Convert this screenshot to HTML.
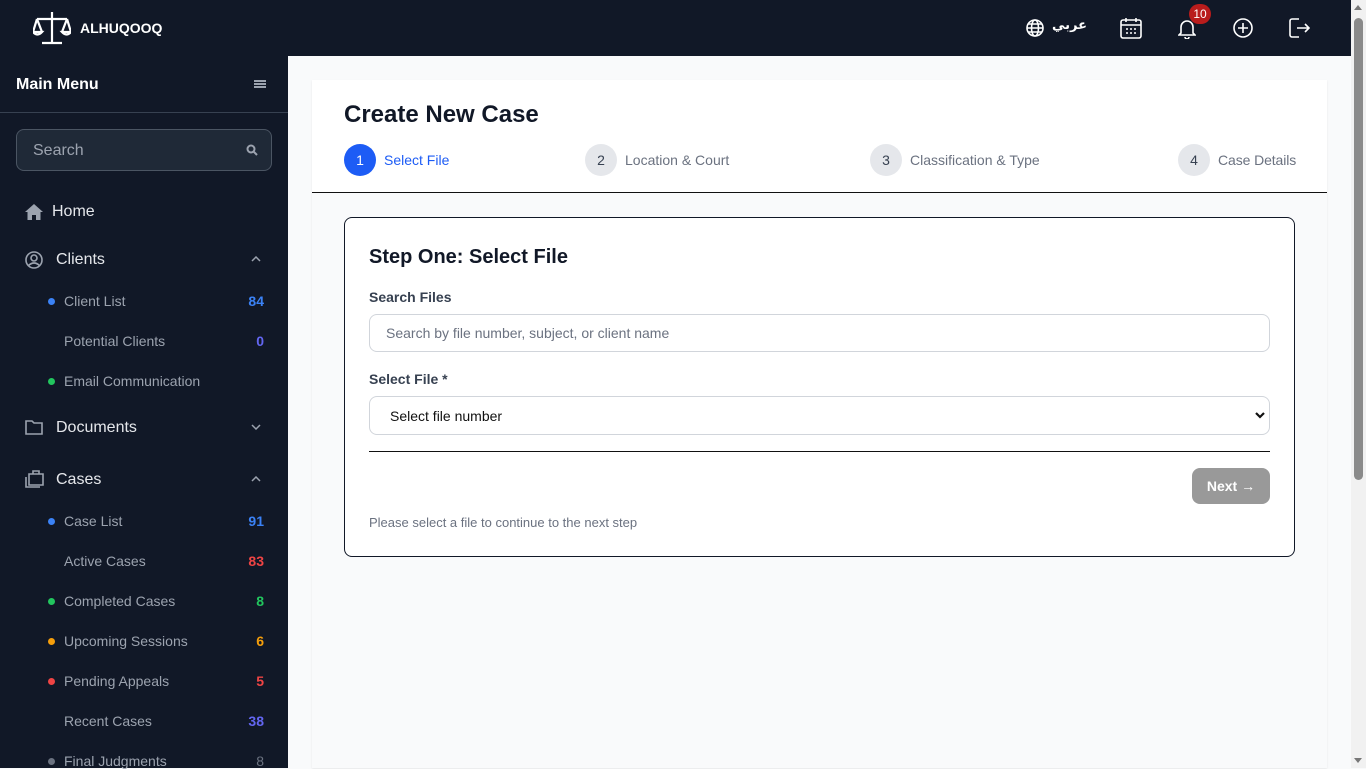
<!DOCTYPE html>
<html><head><meta charset="utf-8">
<style>
*{box-sizing:border-box;margin:0;padding:0}
body{width:1366px;height:768px;overflow:hidden;font-family:"Liberation Sans","Noto Sans CJK SC",sans-serif;background:#f9fafb;position:relative}
.top{position:absolute;left:0;top:0;width:1351px;height:56px;background:#111827;color:#fff}
.side{position:absolute;left:0;top:56px;width:288px;height:712px;background:#111827;color:#e5e7eb}
.sb{position:absolute;right:0;top:0;width:15px;height:768px;background:#f1f1f1}
.sb .th{position:absolute;left:3px;top:18px;width:9px;height:462px;background:#8a8a8a;border-radius:5px}
.ic{position:absolute}
.item{position:absolute;left:0;width:288px;font-size:16px;color:#e5e7eb}
.sub{position:absolute;left:64px;font-size:14px;color:#9ca3af}
.dot{position:absolute;left:-16px;top:5px;width:7px;height:7px;border-radius:50%}
.cnt{position:absolute;left:200px;width:64px;text-align:right;font-weight:bold;font-size:14px}
.chev{position:absolute;left:251px;top:5px}
</style></head><body>
<div class="top">
 <svg class="ic" style="left:33px;top:11px" width="38" height="34" viewBox="0 0 38 34" fill="none" stroke="#fff" stroke-width="2.2"><path d="M19 1v31M9 32h20M4 8h30M4 8l-4 13M4 8l5 13M34 8l-5 13M34 8l4 13M0 21q4.5 5 9 0zM29 21q4.5 5 9 0z"/></svg>
 <div style="position:absolute;left:80px;top:20px;font-weight:bold;font-size:14px">ALHUQOOQ</div>
 <svg class="ic" style="left:1026px;top:19px" width="18" height="18" viewBox="0 0 18 18" fill="none" stroke="#fff" stroke-width="1.6"><circle cx="9" cy="9" r="8"/><ellipse cx="9" cy="9" rx="3.5" ry="8"/><path d="M1 9h16M2.5 5h13M2.5 13h13"/></svg>
 <div style="position:absolute;left:1052px;top:18px;font-size:13px;font-weight:bold;font-family:'DejaVu Sans',sans-serif">عربي</div>
 <svg class="ic" style="left:1120px;top:17px" width="22" height="22" viewBox="0 0 22 22" fill="none" stroke="#fff" stroke-width="1.6"><rect x="1" y="3" width="20" height="18" rx="2"/><path d="M1 8h20M6 1v4M16 1v4"/><g fill="#fff" stroke="none"><circle cx="7" cy="12" r="1"/><circle cx="11" cy="12" r="1"/><circle cx="15" cy="12" r="1"/><circle cx="7" cy="16" r="1"/><circle cx="11" cy="16" r="1"/><circle cx="15" cy="16" r="1"/></g></svg>
 <svg class="ic" style="left:1178px;top:18px" width="18" height="21" viewBox="0 0 18 21" fill="none" stroke="#fff" stroke-width="1.6"><path d="M3 15V9a6 6 0 0 1 12 0v6l2 2H1zM7 19a2 2 0 0 0 4 0"/></svg>
 <div style="position:absolute;left:1189px;top:4px;width:22px;height:20px;border-radius:10px;background:#b91c1c;font-size:12px;text-align:center;line-height:20px">10</div>
 <svg class="ic" style="left:1233px;top:18px" width="20" height="20" viewBox="0 0 20 20" fill="none" stroke="#fff" stroke-width="1.6"><circle cx="10" cy="10" r="9"/><path d="M10 5v10M5 10h10"/></svg>
 <svg class="ic" style="left:1289px;top:18px" width="21" height="20" viewBox="0 0 21 20" fill="none" stroke="#fff" stroke-width="1.6"><path d="M10 1H3a2 2 0 0 0-2 2v14a2 2 0 0 0 2 2h7M8 10h12M16 6l4 4-4 4"/></svg>
</div>
<div class="side">
 <div style="position:absolute;left:16px;top:20px;font-weight:bold;font-size:16px;color:#fff">Main Menu</div>
 <div style="position:absolute;left:254px;top:24px;width:12px;height:8px;border-top:2px solid #9ca3af;border-bottom:2px solid #9ca3af"><div style="margin-top:1px;height:2px;background:#9ca3af"></div></div>
 <div style="position:absolute;left:0;top:56px;width:288px;height:1px;background:#374151"></div>
 <div style="position:absolute;left:16px;top:73px;width:256px;height:42px;border:1px solid #4b5563;border-radius:8px;background:#1f2937;color:#9ca3af;font-size:16px;padding:12px 16px">Search<svg style="position:absolute;right:13px;top:14px" width="12" height="12" viewBox="0 0 12 12" fill="none" stroke="#9ca3af" stroke-width="2"><circle cx="5" cy="5" r="3.5"/><path d="M7.5 7.5L11 11"/></svg></div>
 <div class="item" style="top:147px"><svg class="ic" style="left:25px;top:1px" width="18" height="16" viewBox="0 0 18 16" fill="#9ca3af"><path d="M9 0L0 8h2.5v8h4.5v-5h4v5h4.5V8H18z"/></svg><span style="position:absolute;left:52px">Home</span></div>
 <div class="item" style="top:195px"><svg class="ic" style="left:25px;top:0" width="18" height="18" viewBox="0 0 18 18" fill="none" stroke="#9ca3af" stroke-width="1.6"><circle cx="9" cy="9" r="8"/><circle cx="9" cy="7" r="3"/><path d="M3.5 14.5q5.5-5 11 0"/></svg><span style="position:absolute;left:56px">Clients</span><svg class="chev" width="10" height="6" viewBox="0 0 10 6" fill="none" stroke="#9ca3af" stroke-width="1.5"><path d="M1 5l4-4 4 4"/></svg></div>
 <div class="sub" style="top:237px"><span class="dot" style="background:#3b82f6"></span>Client List</div><div class="cnt" style="top:237px;color:#3b82f6">84</div>
 <div class="sub" style="top:277px">Potential Clients</div><div class="cnt" style="top:277px;color:#6366f1">0</div>
 <div class="sub" style="top:317px"><span class="dot" style="background:#22c55e"></span>Email Communication</div>
 <div class="item" style="top:363px"><svg class="ic" style="left:25px;top:1px" width="18" height="15" viewBox="0 0 18 15" fill="none" stroke="#9ca3af" stroke-width="1.6"><path d="M1 1h6l2 2h8v11H1z"/></svg><span style="position:absolute;left:56px">Documents</span><svg class="chev" width="10" height="6" viewBox="0 0 10 6" fill="none" stroke="#9ca3af" stroke-width="1.5"><path d="M1 1l4 4 4-4"/></svg></div>
 <div class="item" style="top:415px"><svg class="ic" style="left:25px;top:-1px" width="19" height="18" viewBox="0 0 19 18" fill="none" stroke="#9ca3af" stroke-width="1.6"><path d="M4 4h14v11H4zM8 4V1h6v3M1 7v10h14"/></svg><span style="position:absolute;left:56px">Cases</span><svg class="chev" width="10" height="6" viewBox="0 0 10 6" fill="none" stroke="#9ca3af" stroke-width="1.5"><path d="M1 5l4-4 4 4"/></svg></div>
 <div class="sub" style="top:457px"><span class="dot" style="background:#3b82f6"></span>Case List</div><div class="cnt" style="top:457px;color:#3b82f6">91</div>
 <div class="sub" style="top:497px">Active Cases</div><div class="cnt" style="top:497px;color:#ef4444">83</div>
 <div class="sub" style="top:537px"><span class="dot" style="background:#22c55e"></span>Completed Cases</div><div class="cnt" style="top:537px;color:#22c55e">8</div>
 <div class="sub" style="top:577px"><span class="dot" style="background:#f59e0b"></span>Upcoming Sessions</div><div class="cnt" style="top:577px;color:#f59e0b">6</div>
 <div class="sub" style="top:617px"><span class="dot" style="background:#ef4444"></span>Pending Appeals</div><div class="cnt" style="top:617px;color:#ef4444">5</div>
 <div class="sub" style="top:657px">Recent Cases</div><div class="cnt" style="top:657px;color:#6366f1">38</div>
 <div class="sub" style="top:697px"><span class="dot" style="background:#6b7280"></span>Final Judgments</div><div class="cnt" style="top:697px;color:#6b7280;font-weight:normal">8</div>
</div>
<div style="position:absolute;left:312px;top:80px;width:1015px;height:688px;background:#fff;box-shadow:0 1px 2px rgba(0,0,0,.08)">
 <div style="position:absolute;left:32px;top:21px;font-size:24px;font-weight:bold;color:#111827">Create New Case</div>
 <div style="position:absolute;left:32px;top:64px;width:32px;height:32px;border-radius:50%;background:#1d5cf5;color:#fff;text-align:center;line-height:32px;font-size:14px">1</div>
 <div style="position:absolute;left:72px;top:72px;font-size:14px;color:#1d5cf5">Select File</div>
 <div style="position:absolute;left:273px;top:64px;width:32px;height:32px;border-radius:50%;background:#e5e7eb;color:#374151;text-align:center;line-height:32px;font-size:14px">2</div>
 <div style="position:absolute;left:313px;top:72px;font-size:14px;color:#6b7280">Location &amp; Court</div>
 <div style="position:absolute;left:558px;top:64px;width:32px;height:32px;border-radius:50%;background:#e5e7eb;color:#374151;text-align:center;line-height:32px;font-size:14px">3</div>
 <div style="position:absolute;left:598px;top:72px;font-size:14px;color:#6b7280">Classification &amp; Type</div>
 <div style="position:absolute;left:866px;top:64px;width:32px;height:32px;border-radius:50%;background:#e5e7eb;color:#374151;text-align:center;line-height:32px;font-size:14px">4</div>
 <div style="position:absolute;left:906px;top:72px;font-size:14px;color:#6b7280;letter-spacing:-0.1px">Case Details</div>
 <div style="position:absolute;left:0;top:112px;width:1015px;height:576px;border-top:1px solid #111;background:#f9fafb"></div>
</div>
<div style="position:absolute;left:344px;top:217px;width:951px;height:340px;background:#fff;border:1px solid #111827;border-radius:8px">
 <div style="position:absolute;left:24px;top:28px;font-size:20px;font-weight:bold;color:#111827">Step One: Select File</div>
 <div style="position:absolute;left:24px;top:71px;font-size:14px;font-weight:bold;color:#374151">Search Files</div>
 <div style="position:absolute;left:24px;top:96px;width:901px;height:38px;border:1px solid #d1d5db;border-radius:8px;padding:10px 16px;font-size:14px;color:#6b7280">Search by file number, subject, or client name</div>
 <div style="position:absolute;left:24px;top:153px;font-size:14px;font-weight:bold;color:#374151">Select File *</div>
 <div style="position:absolute;left:24px;top:178px;width:901px;height:39px;border:1px solid #d1d5db;border-radius:8px;padding:11px 20px;font-size:14px;color:#111">Select file number<svg style="position:absolute;right:4px;top:14px" width="10" height="8" viewBox="0 0 10 8" fill="none" stroke="#111" stroke-width="2.2"><path d="M1 2l4 4 4-4"/></svg></div>
 <div style="position:absolute;left:24px;top:233px;width:901px;height:1px;background:#111"></div>
 <div style="position:absolute;left:847px;top:250px;width:78px;height:36px;border-radius:8px;background:#999;color:#fff;font-weight:bold;font-size:14px;text-align:center;line-height:36px">Next →</div>
 <div style="position:absolute;left:24px;top:297px;font-size:13px;color:#6b7280">Please select a file to continue to the next step</div>
</div>
<div class="sb"><div class="th"></div><div style="position:absolute;left:3px;top:5px;border:4px solid transparent;border-bottom:5px solid #777;border-top:0"></div><div style="position:absolute;left:3px;bottom:5px;border:4px solid transparent;border-top:5px solid #777;border-bottom:0"></div></div>
</body></html>
